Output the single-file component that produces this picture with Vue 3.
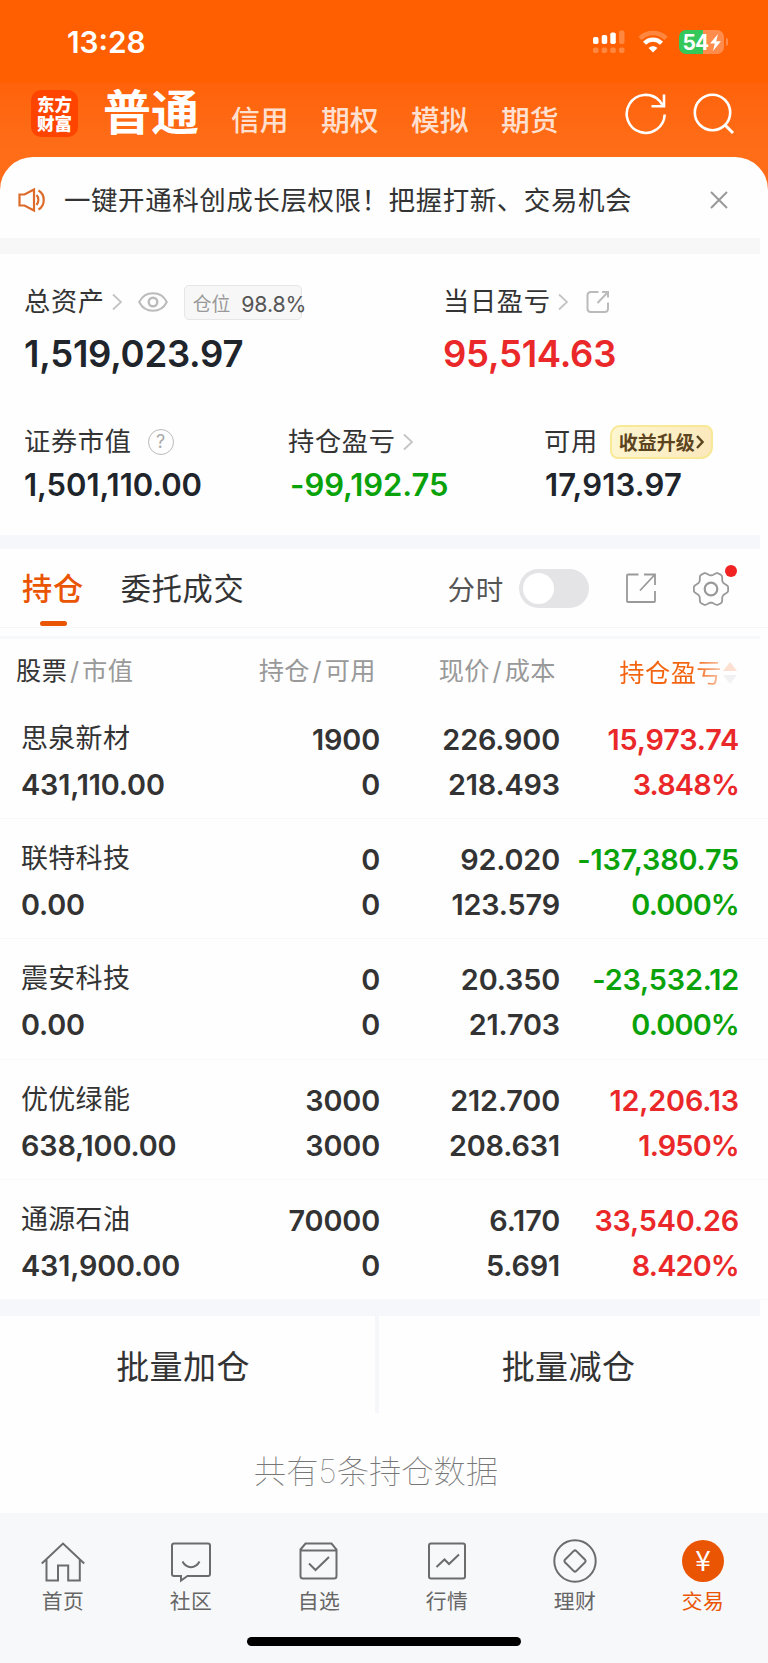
<template>
  <div class="page">
    <header class="top">
      <div class="status">
        <span class="time">13:28</span>
        <svg class="signal" width="32" height="24" viewBox="0 0 32 24" fill="#fff">
          <rect x="0" y="7" width="5.5" height="7" rx="1.8" />
          <rect x="8.7" y="5" width="5.5" height="9" rx="1.8" />
          <rect x="17.3" y="2.5" width="5.5" height="11.5" rx="1.8" />
          <g opacity="0.25">
            <rect x="26" y="0.5" width="5.5" height="13.5" rx="1.8" />
            <rect x="0" y="17.5" width="5.5" height="5.5" rx="1.8" />
            <rect x="8.7" y="17.5" width="5.5" height="5.5" rx="1.8" />
            <rect x="17.3" y="17.5" width="5.5" height="5.5" rx="1.8" />
            <rect x="26" y="17.5" width="5.5" height="5.5" rx="1.8" />
          </g>
        </svg>
        <svg class="wifi" width="30" height="24" viewBox="0 0 30 24" fill="none" stroke="#fff">
          <path d="M2 8.3C9.2 1.2 20.800 1.200 28 8.300" stroke-width="4.500" opacity="0.25" />
          <path d="M6.500 13.200C11.200 8.400 18.800 8.400 23.500 13.200" stroke-width="4.300" />
          <path d="M15 22.500L10.600 18C13 15.700 17 15.700 19.400 18Z" fill="#fff" stroke="none" />
        </svg>
        <div class="battery">
          <span>54</span>
          <svg width="11" height="17" viewBox="0 0 11 17" fill="#fff"><path d="M8 0L0 9.500H4.800L3 17L11 7.200H6.200Z" /></svg>
        </div>
        <i class="battery-tip"></i>
      </div>
      <div class="nav">
        <div class="logo"><span>东方</span><span>财富</span></div>
        <h1>普通</h1>
        <a v-for="item in accounts" :key="item">{{ item }}</a>
        <svg class="refresh" width="42" height="42" viewBox="0 0 42 42" fill="none" stroke="#fff" stroke-width="2.600">
          <path d="M39.700 21.500A19 19 0 1 1 34.500 7.800L38 12.500M39 1.500V13.300H26.500" />
        </svg>
        <svg class="search" width="42" height="42" viewBox="0 0 42 42" fill="none" stroke="#fff" stroke-width="2.600">
          <circle cx="19.500" cy="19.500" r="17.700" />
          <path d="M31.500 31.500L40 40" stroke-width="3" />
        </svg>
      </div>
    </header>

    <main class="sheet">
      <section class="notice">
        <svg class="speaker" width="28" height="24" viewBox="0 0 28 24" fill="none" stroke="#dc6a28" stroke-width="2.200">
          <path d="M1.500 6.500H6.500L16 1.500V22.500L6.500 17.500H1.500Z" />
          <path d="M18.500 7C21 9.500 21 14.500 18.500 17M20.500 2.500C27.500 6.500 27.500 17.500 20.500 21.500" />
        </svg>
        <p>一键开通科创成长层权限！把握打新、交易机会</p>
        <svg width="18" height="18" viewBox="0 0 18 18" stroke="#999" stroke-width="2"><path d="M1 1L17 17M17 1L1 17" /></svg>
      </section>
      <div class="band grey"></div>

      <section class="summary">
        <div class="grid two">
          <div>
            <div class="label">
              <span>总资产</span>
              <svg class="arrow" width="10" height="18" viewBox="0 0 10 18"><path d="M1 1.500L9 9L1 16.500" /></svg>
              <svg class="eye" width="30" height="20" viewBox="0 0 30 20" fill="none" stroke="#bbb" stroke-width="2">
                <path d="M1.200 10C7-1.700 23-1.700 28.800 10C23 21.700 7 21.700 1.200 10Z" />
                <circle cx="15" cy="10" r="4.300" stroke-width="2.400" />
              </svg>
              <div class="ratio"><small>仓位</small><b>98.8%</b></div>
            </div>
            <div class="big">1,519,023.97</div>
          </div>
          <div>
            <div class="label">
              <span>当日盈亏</span>
              <svg class="arrow" width="10" height="18" viewBox="0 0 10 18"><path d="M1 1.500L9 9L1 16.500" /></svg>
              <svg class="share" width="24" height="24" viewBox="0 0 24 24" fill="none" stroke="#bbb" stroke-width="2">
                <path d="M12.500 2H5Q1.500 2 1.500 5.500V18.500Q1.500 22 5 22H18.500Q22 22 22 18.500V12.500M11.500 13L21.500 2.500M16 2H22V7.500" />
              </svg>
            </div>
            <div class="big up">95,514.63</div>
          </div>
        </div>
        <div class="grid three">
          <div>
            <div class="label"><span>证券市值</span><i class="help">?</i></div>
            <div class="mid">1,501,110.00</div>
          </div>
          <div>
            <div class="label">
              <span>持仓盈亏</span>
              <svg class="arrow" width="10" height="18" viewBox="0 0 10 18"><path d="M1 1.500L9 9L1 16.500" /></svg>
            </div>
            <div class="mid down">-99,192.75</div>
          </div>
          <div>
            <div class="label">
              <span>可用</span>
              <div class="upgrade">
                收益升级
                <svg width="8" height="14" viewBox="0 0 8 14" fill="none" stroke="#5c4420" stroke-width="2.400"><path d="M1 1L6.500 7L1 13" /></svg>
              </div>
            </div>
            <div class="mid free">17,913.97</div>
          </div>
        </div>
      </section>
      <div class="band"></div>

      <section class="tabs">
        <span class="tab active">持仓</span>
        <span class="tab">委托成交</span>
        <span class="minute">分时</span>
        <span class="switch"><i></i></span>
        <svg class="export" width="30" height="30" viewBox="0 0 30 30" fill="none" stroke="#999" stroke-width="1.800">
          <path d="M12.500 1.500H2Q1 1.500 1 2.500V28Q1 29 2 29H28Q29 29 29 28V18M14 17.500L28.500 2M18 1.500H29V12" />
        </svg>
        <div class="gear">
          <svg width="36" height="36" viewBox="0 0 36 36" fill="none" stroke="#999" stroke-width="1.800">
            <path :d="gearPath" stroke-linejoin="round" />
            <circle cx="18" cy="18" r="6.300" stroke-width="2.200" />
          </svg>
          <i></i>
        </div>
      </section>
      <div class="thin"></div>

      <section class="holdings">
        <div class="row head">
          <span><em>股票</em><s>/</s>市值</span>
          <span>持仓<s>/</s>可用</span>
          <span>现价<s>/</s>成本</span>
          <div class="sort">
            <span>持仓盈亏</span>
            <svg width="14" height="22" viewBox="0 0 14 22"><path d="M7 0L14 9H0Z" fill="#fde0d2" /><path d="M7 22L14 13H0Z" fill="#f1f1f3" /></svg>
          </div>
        </div>
        <div v-for="s in stocks" :key="s.name" class="row">
          <div><strong>{{ s.name }}</strong><span>{{ s.value }}</span></div>
          <div><span>{{ s.hold }}</span><span>{{ s.usable }}</span></div>
          <div><span>{{ s.price }}</span><span>{{ s.cost }}</span></div>
          <div :class="s.profit.startsWith('-') ? 'down' : 'up'"><span>{{ s.profit }}</span><span class="rate">{{ s.rate }}</span></div>
        </div>
      </section>
      <div class="band last"></div>

      <section class="batch">
        <button>批量加仓</button>
        <button>批量减仓</button>
      </section>
      <p class="total">共有5条持仓数据</p>
    </main>

    <footer class="tabbar">
      <div class="items">
        <a>
          <svg viewBox="0 0 44 44"><path d="M0.800 24.500L22 4.500L43.200 24.500M5.500 20.500V41.500H17V26.500H27.200V41.500H38.800V20.500" /></svg>
          首页
        </a>
        <a>
          <svg viewBox="0 0 44 44"><path d="M5 4.500H39Q41 4.500 41 6.500V35Q41 37 39 37H18.500L12 41.500V37H5Q3 37 3 35V6.500Q3 4.500 5 4.500ZM13.500 22.500C17.500 30 26.500 30 30.500 22.500" /></svg>
          社区
        </a>
        <a>
          <svg viewBox="0 0 44 44"><path d="M3.500 10.500L8.500 4.500H34.500L39.500 10.500V37Q39.500 39.500 37 39.500H6Q3.500 39.500 3.500 37ZM3.500 11.500H39.500M12 24.500L18.500 31L32 18" /></svg>
          自选
        </a>
        <a>
          <svg viewBox="0 0 44 44"><path d="M6 4.500H38Q40 4.500 40 6.500V37.500Q40 39.500 38 39.500H6Q4 39.500 4 37.500V6.500Q4 4.500 6 4.500ZM11.500 28L19.500 20.500L24 25L34 15.500" /></svg>
          行情
        </a>
        <a>
          <svg viewBox="0 0 44 44"><circle cx="22" cy="22" r="20.700" /><path d="M20.800 11.900L11.900 20.800Q10.800 22 11.900 23.200L20.800 32.100Q22 33.200 23.200 32.100L32.100 23.200Q33.200 22 32.100 20.800L23.200 11.900Q22 10.800 20.800 11.900Z" /></svg>
          理财
        </a>
        <a class="on"><i>¥</i>交易</a>
      </div>
      <div class="home-bar"></div>
    </footer>
  </div>
</template>

<script setup>
const accounts = ['信用', '期权', '模拟', '期货'];

const stocks = [
  { name: '思泉新材', value: '431,110.00', hold: '1900', usable: '0', price: '226.900', cost: '218.493', profit: '15,973.74', rate: '3.848%' },
  { name: '联特科技', value: '0.00', hold: '0', usable: '0', price: '92.020', cost: '123.579', profit: '-137,380.75', rate: '0.000%' },
  { name: '震安科技', value: '0.00', hold: '0', usable: '0', price: '20.350', cost: '21.703', profit: '-23,532.12', rate: '0.000%' },
  { name: '优优绿能', value: '638,100.00', hold: '3000', usable: '3000', price: '212.700', cost: '208.631', profit: '12,206.13', rate: '1.950%' },
  { name: '通源石油', value: '431,900.00', hold: '70000', usable: '0', price: '6.170', cost: '5.691', profit: '33,540.26', rate: '8.420%' }
];

// six soft teeth, with a tooth pointing left and right
const gearPath = Array.from({ length: 120 }, (_, i) => {
  const a = (i / 120) * Math.PI * 2;
  const wave = Math.max(-0.9, Math.min(0.6, Math.cos(6 * a)));
  const r = 15.8 + 2.3 * wave;
  return `${i ? 'L' : 'M'}${(18 + r * Math.cos(a)).toFixed(2)} ${(18 + r * Math.sin(a)).toFixed(2)}`;
}).join('') + 'Z';
</script>

<style>
body { margin: 0; background: #fefefe; }
</style>

<style scoped>
.page {
  width: 768px; height: 1663px; overflow: hidden;
  display: flex; flex-direction: column;
  font-family: Inter, "Noto Sans CJK SC", sans-serif;
  color: #333; background: #fefefe;
}
svg { display: block; flex: none; }
i, em { font-style: normal; }
s { text-decoration: none; }
p, h1 { margin: 0; }
.up { color: #ea2829; }
.down { color: #0aa20a; }

.top {
  height: 190px; flex: none; color: #fff;
  background: linear-gradient(#ff5f00 0, #ff5f00 82px, #ff630b 84px, #ff6d19 150px);
}
.status { height: 84px; box-sizing: border-box; padding: 0 40px 0 67px; display: flex; align-items: center; }
.time { font-size: 29.8px; font-weight: 600; margin-right: auto; }
.signal { margin-right: 13px; }
.wifi { margin-right: 11px; }
.battery {
  width: 45px; height: 24px; border-radius: 7px;
  display: flex; align-items: center; justify-content: center; gap: 1px;
  background: linear-gradient(90deg, #34c759 54%, #ff8c4c 54%);
  font-size: 21px; font-weight: 700; letter-spacing: -0.8px;
}
.battery-tip { width: 2px; height: 8px; margin-left: 2px; border-radius: 0 3px 3px 0; background: #ff8c4c; }
.nav { height: 73px; padding-left: 31px; display: flex; align-items: flex-start; }
.logo {
  width: 47px; height: 47px; margin-top: 6px; border-radius: 10px; background: #ff4400;
  display: flex; flex-direction: column; align-items: center; justify-content: center;
  font-size: 17.5px; line-height: 19px; font-weight: 900;
}
h1 { width: 128px; margin-left: 25px; font-size: 48px; line-height: 58px; font-weight: 700; }
.nav a { width: 90px; margin-top: 17px; font-size: 28.8px; line-height: 40px; font-weight: 500; color: #ffe0d0; }
.refresh { margin: 9px 0 0 34px; }
.search { margin: 9px 0 0 26px; }

.sheet { height: 1356px; margin-top: -33px; flex: none; background: #fefefe; border-radius: 33px 33px 0 0; }
.notice { height: 81px; padding: 0 40px 0 18px; display: flex; align-items: center; }
.notice p { flex: 1; margin: 2px 0 0 18px; font-size: 26.5px; letter-spacing: 0.55px; white-space: nowrap; }
.notice svg { position: relative; top: 2px; }
.band { width: 760px; height: 14px; background: #f5f7fa; }
.band.grey { height: 16px; background: #f7f7f7; }
.band.last { height: 16px; }

.summary { height: 281px; box-sizing: border-box; padding: 30px 0 0 24px; }
.grid { display: grid; }
.two { grid-template-columns: 419px 1fr; }
.three { grid-template-columns: 264px 256px 1fr; margin-top: 52px; }
.label { height: 36px; display: flex; align-items: center; font-size: 26.2px; letter-spacing: 0.7px; white-space: nowrap; }
.label > span { margin-top: -4px; }
.arrow { margin-left: 7px; fill: none; stroke: #c4c4c4; stroke-width: 1.8; }
.eye { margin-left: 16px; }
.share { margin-left: 18px; }
.ratio {
  width: 118px; height: 35px; box-sizing: border-box; margin-left: 16px; padding-left: 8px;
  display: flex; align-items: center; gap: 11px;
  border: 1px solid #e6e6e6; border-radius: 5px; background: #f7f7f7;
}
.ratio small { font-size: 18.8px; letter-spacing: 0; color: #999; }
.ratio b { margin-top: 4px; font-size: 21.3px; font-weight: 400; letter-spacing: -0.1px; color: #555; }
.big { height: 38px; margin-top: 14px; font-size: 36.5px; line-height: 40px; font-weight: 600; letter-spacing: -0.25px; }
.mid { height: 36px; margin-top: 6px; font-size: 31px; line-height: 37px; font-weight: 600; letter-spacing: -0.05px; }
.mid.down { padding-left: 2px; }
.mid.free { padding-left: 1px; letter-spacing: 0.2px; }
.big:not(.up), .mid:not(.down) { color: #20242b; }
.help {
  width: 26px; height: 26px; box-sizing: border-box; margin-left: 16px;
  border: 1.8px solid #bbb; border-radius: 50%;
  font-size: 18px; line-height: 23px; text-align: center; letter-spacing: 0; color: #aaa;
}
.upgrade {
  width: 103px; height: 34px; box-sizing: border-box; margin-left: 12px; padding: 0 0 2px 7px;
  display: flex; align-items: center; gap: 1px;
  border: 2px solid #f8e996; border-radius: 10px 8px 12px 8px;
  background: linear-gradient(100deg, #fdf6d0, #fce9bd);
  font-size: 19px; font-weight: 700; letter-spacing: 0; color: #5c4420;
}
.upgrade svg { margin-top: 2px; }

.tabs { height: 79px; padding-left: 22px; box-sizing: border-box; display: flex; align-items: center; border-bottom: 1px solid #f6f6f8; }
.tab { margin: -2px 37px 0 0; font-size: 30.2px; letter-spacing: 0.7px; }
.active { position: relative; color: #ea5504; font-weight: 500; }
.active::after { content: ''; position: absolute; left: 18px; bottom: -17px; width: 27px; height: 5px; border-radius: 3px; background: #ea5504; }
.minute { margin: -1px 0 0 auto; font-size: 27.5px; letter-spacing: 0.8px; color: #555; }
.switch { width: 70px; height: 39px; box-sizing: border-box; margin-left: 15px; padding: 4px; border-radius: 20px; background: #e4e4e6; }
.switch i { display: block; width: 31px; height: 31px; border-radius: 50%; background: #fff; }
.export { margin-left: 37px; }
.gear { position: relative; margin: 1px 39px 0 37px; }
.gear i { position: absolute; right: -8px; top: -6px; width: 12px; height: 12px; border-radius: 50%; background: #f02222; }
.thin { width: 760px; height: 3px; margin-top: 8px; background: #f7f8fa; }

.row {
  height: 120.2px; box-sizing: border-box; padding: 18px 29px 0 21px;
  display: grid; grid-template-columns: 179px 180px 180px 179px;
  border-bottom: 1.5px solid #f6f7f8;
  font-size: 28.8px; line-height: 45px; font-weight: 600; letter-spacing: -0.15px; color: #333;
}
.row > div { display: flex; flex-direction: column; align-items: flex-end; white-space: nowrap; }
.row > div:first-child { align-items: flex-start; }
.row > .up { color: #ea2829; }
.row > .down { color: #0aa20a; }
.row strong { position: relative; top: -1px; font-size: 27px; font-weight: 400; letter-spacing: 0.3px; }
.row .rate { letter-spacing: -0.8px; }
.head {
  height: 60px; padding: 7px 6px 0 16px; border: 0;
  grid-template-columns: 179px 181px 180px 181px;
  font-size: 25.2px; line-height: 50px; font-weight: 400; letter-spacing: 0.5px; color: #999;
}
.head > span { text-align: right; white-space: nowrap; }
.head > span:first-child { text-align: left; }
.head em { color: #333; }
.head s { margin: 0 2.500px; }
.row > .sort { flex-direction: row; align-items: center; justify-content: flex-end; gap: 1px; }
.sort span {
  color: transparent; background: linear-gradient(90deg, #f26410 74%, #f9c9b0 100%);
  background-clip: text; -webkit-background-clip: text;
}

.batch { height: 97px; display: flex; }
.batch button {
  flex: 1; padding: 2px 10px 0 0; border: 0; background: none;
  font: 400 33px Inter, "Noto Sans CJK SC", sans-serif; letter-spacing: 0.4px; color: #333;
}
.batch button:first-child { flex: 0 0 379px; padding: 2px 9px 0 0; border-right: 4px solid #f5f7fa; }
.total { width: 752px; margin-top: 35px; font-size: 32.3px; line-height: 48px; font-weight: 100; text-align: center; color: #777; }

.tabbar { height: 150px; flex: none; background: #f7f8fa; }
.items { display: flex; margin-left: -1px; }
.items a {
  flex: 0 0 128px; height: 124px; padding-top: 26px; box-sizing: border-box;
  display: flex; flex-direction: column; align-items: center;
  font-size: 20.8px; line-height: 37px; letter-spacing: 0.5px; color: #666;
}
.items svg { width: 44px; height: 44px; fill: none; stroke: #6c6c6c; stroke-width: 2; }
.items .on { color: #ea5504; }
.on i {
  width: 42px; height: 42px; margin: 1px 0; border-radius: 50%; background: #ea5504;
  color: #fff; font: 28px/39px "Noto Sans CJK SC", sans-serif; letter-spacing: 0; text-align: center;
}
.home-bar { width: 274px; height: 9px; margin: 0 auto; border-radius: 5px; background: #000; }
</style>
